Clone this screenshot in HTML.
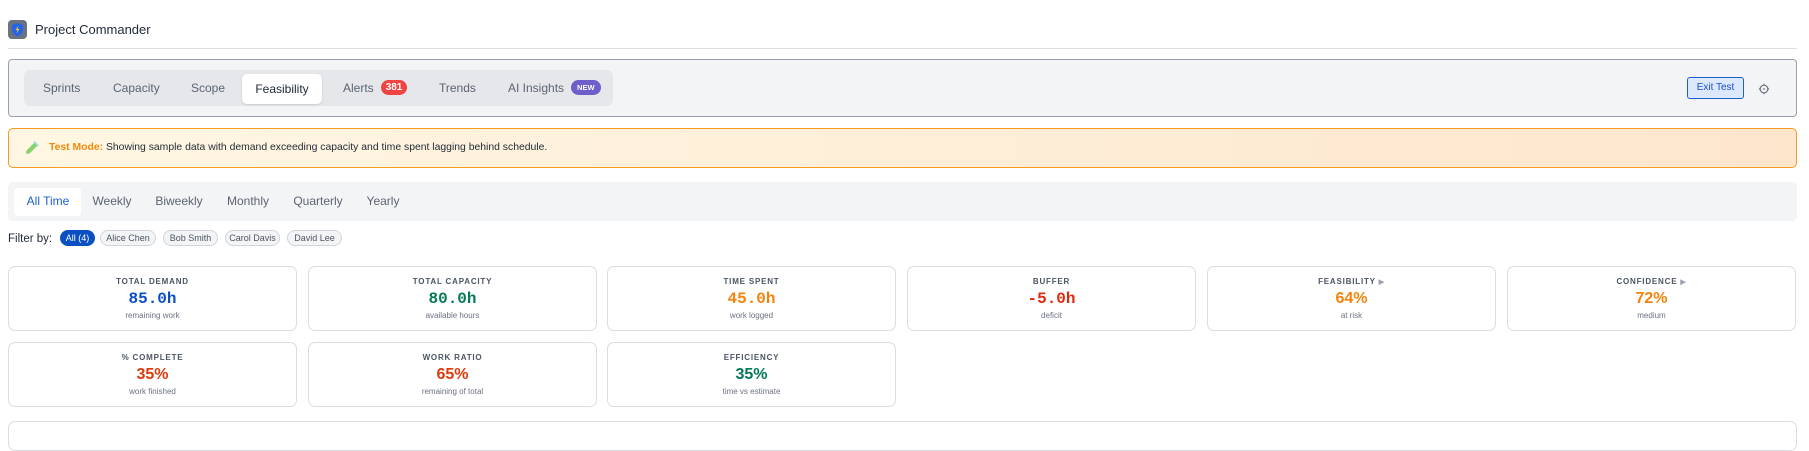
<!DOCTYPE html>
<html><head><meta charset="utf-8"><style>
*{box-sizing:border-box;margin:0;padding:0}
body{width:1809px;height:427px;overflow:hidden;background:#fff;font-family:"Liberation Sans",sans-serif;color:#111827;position:relative}
.a{position:absolute}
.logo{left:8px;top:20px;width:19px;height:19px;background:#6b7280;border-radius:4px}
.title{left:35px;top:21px;font-size:13px;color:#1f2937;line-height:18px}
.hr{left:8px;top:48px;width:1789px;height:1px;background:#dedede}
.nav{left:8px;top:59px;width:1789px;height:58px;background:#f3f4f6;border:1px solid #9aa1ad;border-radius:4px}
.tg{left:24px;top:70px;width:589px;height:36px;background:#e5e7eb;border-radius:6px}
.tab{position:absolute;top:0;height:36px;line-height:36px;font-size:12px;color:#5b6473;white-space:nowrap}
.act{left:242px;top:74px;width:80px;height:30px;background:#fff;border-radius:5px;box-shadow:0 1px 2px rgba(0,0,0,.12);font-size:12px;line-height:30px;text-align:center;color:#1f2937}
.badge{display:inline-block;border-radius:9px;color:#fff;font-size:10px;font-weight:bold;line-height:15px;height:15px;padding:0 5px;vertical-align:middle;margin-left:7px;position:relative;top:-1px}
.exit{left:1687px;top:77px;width:57px;height:22px;border:1px solid #1d5fcc;background:#dbe8fd;border-radius:3px;font-size:10px;color:#1d4ed8;text-align:center;line-height:20px}
.banner{left:8px;top:128px;width:1789px;height:40px;border:1px solid #f59a23;border-radius:5px;background:linear-gradient(90deg,#fff7e3,#fee6cd)}
.btxt{left:49px;top:142px;font-size:10.4px;color:#1f2937;white-space:nowrap}
.per{left:8px;top:182px;width:1789px;height:39px;background:#f3f4f6;border-radius:5px}
.pt{position:absolute;top:0;line-height:39px;font-size:12px;color:#5b6473;transform:translateX(-50%)}
.pact{left:14px;top:188px;width:67px;height:28px;background:#fff;border-radius:4px}
.fl{left:8px;top:231px;font-size:11.5px;line-height:16px;color:#1f2937}
.pill{position:absolute;top:230px;height:16px;border:1px solid #d1d5db;background:#f3f4f6;border-radius:8px;font-size:9px;color:#4b5563;text-align:center;line-height:14px}
.card{position:absolute;width:289px;height:65px;border:1px solid #dcdde3;border-radius:7px;text-align:center;background:#fff}
.lb{position:absolute;left:0;right:0;top:10px;font-size:8px;font-weight:bold;letter-spacing:.8px;color:#4b5563}
.v{position:absolute;left:0;right:0;top:22px;font-size:16px;font-weight:bold;line-height:20px}
.m{font-family:"Liberation Mono",monospace}
.sb{position:absolute;left:0;right:0;top:44px;font-size:8px;color:#6b7280}
.ar{color:#9ca3af;font-size:7px}
</style></head><body>
<div class="a logo"><svg width="19" height="19" viewBox="0 0 19 19"><path d="M9.5 3 L15 5 V9.5 C15 13 12.5 15 9.5 16.5 C6.5 15 4 13 4 9.5 V5 Z" fill="#2563eb"/><path d="M10.5 5.5 L7.5 10 H9.5 L8.5 13.5 L11.5 9 H9.5 Z" fill="#facc15"/></svg></div>
<div class="a title">Project Commander</div>
<div class="a hr"></div>
<div class="a nav"></div>
<div class="a tg">
<div class="tab" style="left:19px">Sprints</div>
<div class="tab" style="left:89px">Capacity</div>
<div class="tab" style="left:167px">Scope</div>
<div class="tab" style="left:319px">Alerts<span class="badge" style="background:#ef4444">381</span></div>
<div class="tab" style="left:415px">Trends</div>
<div class="tab" style="left:484px">AI Insights<span class="badge" style="background:#6d5fc9;font-size:7.5px;padding:0 6px">NEW</span></div>
</div>
<div class="a act">Feasibility</div>
<div class="a exit">Exit Test</div>
<div class="a" style="left:1758px;top:82px"><svg width="12" height="12" viewBox="0 0 12 12"><circle cx="6" cy="6" r="3.8" fill="none" stroke="#6b7280" stroke-width="1.2"/><circle cx="6" cy="6" r="0.9" fill="#6b7280"/><path d="M6 0.8V2.2M6 9.8V11.2M0.8 6H2.2M9.8 6H11.2" stroke="#6b7280" stroke-width="1.2"/></svg></div>
<div class="a banner"></div>
<div class="a" style="left:24px;top:140px"><svg width="16" height="16" viewBox="0 0 16 16"><path d="M11 2 L14 5 L6 13 C5 14 3 14 2.5 13.5 C2 13 2 11 3 10 Z" fill="#86d36b"/><path d="M10 1.5 L14.5 6" stroke="#a8d8f0" stroke-width="1.6"/></svg></div>
<div class="a btxt"><b style="color:#f08a0c">Test Mode:</b> Showing sample data with demand exceeding capacity and time spent lagging behind schedule.</div>
<div class="a per"></div>
<div class="a pact"></div>
<div class="a per" style="background:none">
<div class="pt" style="left:40px;color:#1d5fcc">All Time</div>
<div class="pt" style="left:104px">Weekly</div>
<div class="pt" style="left:171px">Biweekly</div>
<div class="pt" style="left:240px">Monthly</div>
<div class="pt" style="left:310px">Quarterly</div>
<div class="pt" style="left:375px">Yearly</div>
</div>
<div class="a fl">Filter by:</div>
<div class="pill" style="left:60px;width:35px;background:#0b4fc4;border-color:#0b4fc4;color:#fff">All (4)</div>
<div class="pill" style="left:100px;width:56px">Alice Chen</div>
<div class="pill" style="left:163px;width:55px">Bob Smith</div>
<div class="pill" style="left:225px;width:55px">Carol Davis</div>
<div class="pill" style="left:287px;width:55px">David Lee</div>

<div class="card" style="left:8px;top:266px"><div class="lb">TOTAL DEMAND</div><div class="v m" style="color:#0b4fc4">85.0h</div><div class="sb">remaining work</div></div>
<div class="card" style="left:308px;top:266px"><div class="lb">TOTAL CAPACITY</div><div class="v m" style="color:#047857">80.0h</div><div class="sb">available hours</div></div>
<div class="card" style="left:607px;top:266px"><div class="lb">TIME SPENT</div><div class="v m" style="color:#f5820b">45.0h</div><div class="sb">work logged</div></div>
<div class="card" style="left:907px;top:266px"><div class="lb">BUFFER</div><div class="v m" style="color:#dc2a0e">-5.0h</div><div class="sb">deficit</div></div>
<div class="card" style="left:1207px;top:266px"><div class="lb">FEASIBILITY <span class="ar">▶</span></div><div class="v" style="color:#f5820b">64%</div><div class="sb">at risk</div></div>
<div class="card" style="left:1507px;top:266px"><div class="lb">CONFIDENCE <span class="ar">▶</span></div><div class="v" style="color:#f5820b">72%</div><div class="sb">medium</div></div>
<div class="card" style="left:8px;top:342px"><div class="lb">% COMPLETE</div><div class="v" style="color:#dc3a0a">35%</div><div class="sb">work finished</div></div>
<div class="card" style="left:308px;top:342px"><div class="lb">WORK RATIO</div><div class="v" style="color:#dc3a0a">65%</div><div class="sb">remaining of total</div></div>
<div class="card" style="left:607px;top:342px"><div class="lb">EFFICIENCY</div><div class="v" style="color:#047857">35%</div><div class="sb">time vs estimate</div></div>
<div class="card" style="left:8px;top:421px;width:1789px;height:30px"></div>
</body></html>
